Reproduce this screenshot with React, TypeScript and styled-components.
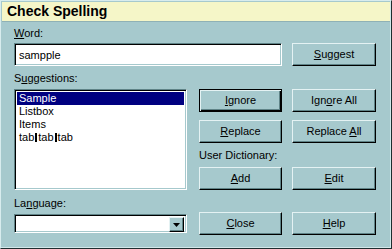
import styled, { createGlobalStyle } from "styled-components";

const GlobalStyle = createGlobalStyle`
    body {
        margin: 0;
        background: #a6c9cd;
        font-family: "Liberation Sans", Arial, sans-serif;
    }
`;

const Window = styled.div`
    box-sizing: border-box;
    width: 392px;
    height: 249px;
    background: #a6c9cd;
    border: 1px solid;
    border-color: #d8ecee #1e2e30 #1e2e30 #d8ecee;
    box-shadow: inset -1px -1px #d2e8ea;
    font-size: 11px;
    color: #000;
`;

const TitleBar = styled.div`
    margin: 1px 1px 0;
    height: 19px;
    padding-left: 5px;
    background: #f5f6c8;
    border-bottom: 1px solid #8fb1b5;
    font-size: 14px;
    font-weight: bold;
    line-height: 19px;
`;

const Body = styled.div`
    display: grid;
    grid-template-columns: 173px 12px 83px 10px 84px;
    grid-template-rows: 15px 23px 23px 23px 8px 23px 24px 23px 22px 23px;
    grid-template-areas:
        "word . . . ."
        "input input input . suggest"
        "sugg . . . ."
        "list . ignore . ignoreall"
        "list . . . ."
        "list . replace . replaceall"
        "list . dict dict dict"
        "list . add . edit"
        "lang . . . ."
        "combo . close . help";
    padding: 6px 0 0 13px;
`;

const Label = styled.div<{ $area: string; $pad?: number }>`
    grid-area: ${(p) => p.$area};
    align-self: end;
    padding-bottom: ${(p) => p.$pad ?? 3}px;
    line-height: 13px;
    white-space: nowrap;
`;

const Sunken = styled.div<{ $area: string }>`
    grid-area: ${(p) => p.$area};
    box-sizing: border-box;
    background: #fff;
    border: 1px solid;
    border-color: #5f8387 #fff #fff #5f8387;
    box-shadow: inset 1px 1px #000, inset -1px -1px #a6c9cd;
`;

const TextBox = styled(Sunken)`
    padding: 5px 4px;
    line-height: 13px;
`;

const ListBox = styled(Sunken)`
    padding: 2px 2px;
`;

const ListItem = styled.div<{ $selected?: boolean }>`
    height: 13px;
    line-height: 13px;
    padding-left: 2px;
    background: ${(p) => (p.$selected ? "#000080" : "transparent")};
    color: ${(p) => (p.$selected ? "#fff" : "#000")};
`;

const TabBar = styled.span`
    display: inline-block;
    width: 2px;
    height: 9px;
    margin: 0 1px;
    background: #000;
    vertical-align: -1px;
`;

const Combo = styled(Sunken)`
    align-self: center;
    height: 19px;
    display: flex;
    justify-content: flex-end;
    padding: 2px;
`;

const DropButton = styled.div`
    box-sizing: border-box;
    width: 15px;
    height: 15px;
    background: #a6c9cd;
    border: 1px solid;
    border-color: #e4f2f3 #000 #000 #e4f2f3;
    box-shadow: inset -1px -1px #5f8387;
    display: flex;
    align-items: center;
    justify-content: center;
`;

const Button = styled.div<{ $area: string; $default?: boolean }>`
    grid-area: ${(p) => p.$area};
    box-sizing: border-box;
    display: flex;
    align-items: center;
    justify-content: center;
    background: #a6c9cd;
    border: 1px solid;
    border-color: ${(p) =>
        p.$default ? "#000" : "#e4f2f3 #000 #000 #e4f2f3"};
    box-shadow: ${(p) =>
        p.$default
            ? "inset 1px 1px #e4f2f3, inset -1px -1px #000, inset -2px -2px #5f8387"
            : "inset -1px -1px #5f8387"};
    font-size: 11px;
    padding-bottom: 1px;
`;

const App = () => {
    return (
        <>
            <GlobalStyle />
            <Window>
                <TitleBar>Check Spelling</TitleBar>
                <Body>
                    <Label $area="word">
                        <u>W</u>ord:
                    </Label>
                    <TextBox $area="input">sampple</TextBox>
                    <Button $area="suggest">
                        <span>
                            <u>S</u>uggest
                        </span>
                    </Button>

                    <Label $area="sugg" $pad={4}>
                        S<u>u</u>ggestions:
                    </Label>
                    <ListBox $area="list">
                        <ListItem $selected>Sample</ListItem>
                        <ListItem>Listbox</ListItem>
                        <ListItem>Items</ListItem>
                        <ListItem>
                            tab
                            <TabBar />
                            tab
                            <TabBar />
                            tab
                        </ListItem>
                    </ListBox>

                    <Button $area="ignore" $default>
                        <span>
                            <u>I</u>gnore
                        </span>
                    </Button>
                    <Button $area="ignoreall">
                        <span>
                            Ign<u>o</u>re All
                        </span>
                    </Button>
                    <Button $area="replace">
                        <span>
                            <u>R</u>eplace
                        </span>
                    </Button>
                    <Button $area="replaceall">
                        <span>
                            Replace <u>A</u>ll
                        </span>
                    </Button>
                    <Label $area="dict" $pad={5}>
                        User Dictionary:
                    </Label>
                    <Button $area="add">
                        <span>
                            <u>A</u>dd
                        </span>
                    </Button>
                    <Button $area="edit">
                        <span>
                            <u>E</u>dit
                        </span>
                    </Button>

                    <Label $area="lang" $pad={2}>
                        La<u>n</u>guage:
                    </Label>
                    <Combo $area="combo">
                        <DropButton>
                            <svg width="7" height="4" viewBox="0 0 7 4">
                                <path d="M0 0h7L3.5 4z" fill="#000" />
                            </svg>
                        </DropButton>
                    </Combo>
                    <Button $area="close">
                        <span>
                            <u>C</u>lose
                        </span>
                    </Button>
                    <Button $area="help">
                        <span>
                            <u>H</u>elp
                        </span>
                    </Button>
                </Body>
            </Window>
        </>
    );
};

export default App;
